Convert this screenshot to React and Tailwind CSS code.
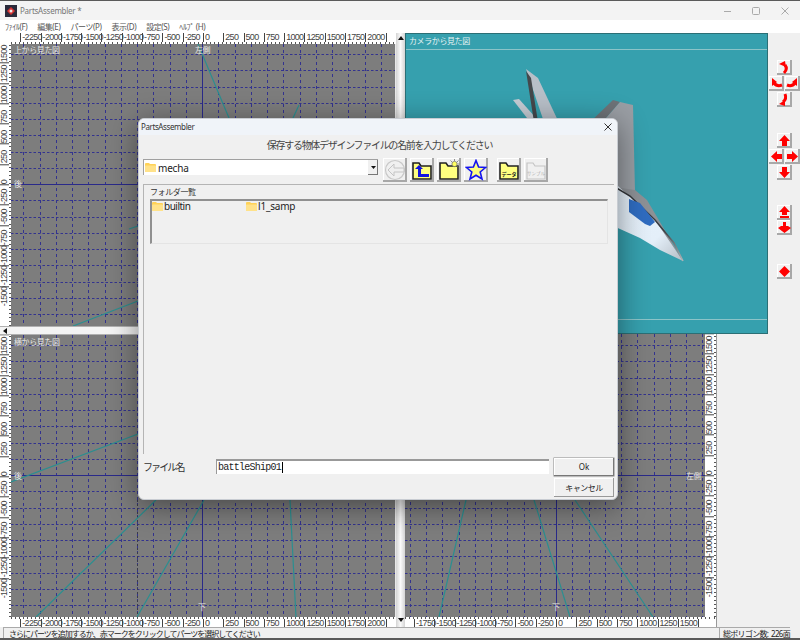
import React from "react";

const FONT = "font-['Noto_Sans','Noto_Sans_CJK_JP',sans-serif]";

const H_TOP = [-2250, -2000, -1750, -1500, -1250, -1000, -750, -500, -250, 0, 250, 500, 750, 1000, 1250, 1500, 1750, 2000, ""];
const H_RIGHT = [-1750, -1500, -1250, -1000, -750, -500, -250, 0, 250, 500, 750, 1000, 1250, 1500, ""];
const V_VALUES = [1500, 1250, 1000, 750, 500, 250, 0, -250, -500, -750, -1000, -1250, -1500];

const HRuler = ({ values, lead, ticksTop = false }) => {
  const ticks = <div className="h-[2px] shrink-0 bg-[repeating-linear-gradient(90deg,#555_0,#555_1px,transparent_1px,transparent_4.06px)]" />;
  return (
    <div className="flex-1 min-w-0 h-full flex flex-col overflow-hidden bg-white">
      {ticksTop && ticks}
      <div className="flex flex-1 min-h-0" style={{ paddingLeft: lead }}>
        {values.map((v, i) => (
          <div key={i} className="w-[20.3px] shrink-0 border-l border-[#444] pl-px text-[9px] leading-[8px] tracking-[-0.7px] text-[#444] font-['Liberation_Sans',sans-serif]">
            {v}
          </div>
        ))}
      </div>
      {!ticksTop && ticks}
    </div>
  );
};

const VRuler = ({ top, className = "" }) => (
  <div className={`h-full shrink-0 flex overflow-hidden bg-white ${className}`}>
    <div className="flex-1 flex flex-col" style={{ marginTop: top }}>
      {V_VALUES.map((v) => (
        <div key={v} className="h-[20.3px] shrink-0 border-b border-[#444] [writing-mode:vertical-lr] rotate-180 text-[9px] leading-[9px] tracking-[-0.7px] text-[#444] font-['Liberation_Sans',sans-serif]">
          {v}
        </div>
      ))}
    </div>
    <div className="w-[2px] bg-[repeating-linear-gradient(0deg,#555_0,#555_1px,transparent_1px,transparent_4.06px)]" />
  </div>
);

// grid view, drawn in screen coordinates through the viewBox
const GridView = ({ x, y, w, h, axisX, axisY, lines, labels, children }) => {
  const vs = [];
  const hs = [];
  for (let i = -20; i <= 20; i++) {
    vs.push(axisX + i * 16.25);
    hs.push(axisY + i * 16.25);
  }
  return (
    <div className="relative shrink-0 bg-[#7d7d7d] overflow-hidden" style={{ width: w, height: h }}>
      <svg width={w} height={h} viewBox={`${x} ${y} ${w} ${h}`} className="block">
        {vs.map((p) => (
          <line key={p} x1={Math.round(p) + 0.5} x2={Math.round(p) + 0.5} y1={y} y2={y + h} stroke="#33338f" strokeDasharray="3 3" />
        ))}
        {hs.map((p) => (
          <line key={p} y1={Math.round(p) + 0.5} y2={Math.round(p) + 0.5} x1={x} x2={x + w} stroke="#33338f" strokeDasharray="2.5 2" />
        ))}
        <line x1={axisX + 0.5} x2={axisX + 0.5} y1={y} y2={y + h} stroke="#2a2a8a" />
        <line y1={axisY + 0.5} y2={axisY + 0.5} x1={x} x2={x + w} stroke="#2a2a8a" />
        {children}
        {lines.map((l, i) => (
          <line key={i} x1={l[0]} y1={l[1]} x2={l[2]} y2={l[3]} stroke="#2b8f90" strokeWidth="1.2" />
        ))}
      </svg>
      {labels.map((l) => (
        <span key={l.text + l.x} className="absolute text-[8px] leading-[10px] tracking-[-0.4px] text-[#e6e6e6]" style={{ left: l.x - x, top: l.y - y }}>
          {l.text}
        </span>
      ))}
    </div>
  );
};

const Camera = () => (
  <div className="relative w-[363px] shrink-0 h-full bg-[#36a0ae] border border-[#2b6f75]">
    <svg width="361" height="299" viewBox="406 34 361 299" className="block">
      <defs>
        <linearGradient id="belly" x1="0" y1="0" x2="1" y2="1">
          <stop offset="0" stopColor="#e6f1fb" />
          <stop offset="0.7" stopColor="#e4eff9" />
          <stop offset="1" stopColor="#b4bcc4" />
        </linearGradient>
        <linearGradient id="edge" x1="0" y1="0" x2="1" y2="1">
          <stop offset="0" stopColor="#2c2e32" />
          <stop offset="0.7" stopColor="#3a3d42" />
          <stop offset="1" stopColor="#b0b4b8" />
        </linearGradient>
      </defs>
      <line x1="406" x2="767" y1="49.5" y2="49.5" stroke="#8cc4c8" />
      <line x1="406" x2="767" y1="319.5" y2="319.5" stroke="#8cc4c8" />
      <polygon points="513,100 519,99 536,118 527,118" fill="#c5ccd4" />
      <polygon points="526,69 538,78 560,125 545,125" fill="#b8bfc8" />
      <polygon points="526,71 531,78 538,122 534,122" fill="#45484c" />
      <polygon points="587,125 613,100 620,102 600,125" fill="#6e7378" />
      <polygon points="600,125 620,102 633,105 635,192 600,195" fill="#9a9ea4" />
      <polygon points="600,185 635,190 647,200 683,261 655,222" fill="#8d9196" />
      <polygon points="600,180 618,186 655,220 683,261 660,250 640,238 600,220" fill="url(#belly)" />
      <polyline points="600,178 630,196 655,220 674,243 683,261" fill="none" stroke="url(#edge)" strokeWidth="1.5" />
      <polygon points="629,199 640,203 655,222 650,226 645,224 629,212" fill="#2f6cc0" />
    </svg>
    <span className="absolute left-[3px] top-[1px] text-[8px] leading-[11px] tracking-[-0.4px] text-[#e6f2f3]">カメラから見た図</span>
  </div>
);

const RedIcon = ({ name }) => {
  const red = "#ff0000";
  const shapes = {
    rotUp: <><path d="M7 13 Q11 9 8 5" fill="none" stroke={red} strokeWidth="3" /><polygon points="2,4 8,1 9,7" fill={red} /></>,
    rotDown: <><path d="M8 2 Q10 7 6 10" fill="none" stroke={red} strokeWidth="3" /><polygon points="2,12 8,8 8,14" fill={red} /></>,
    rotLeft: <><path d="M13 9 Q8 11 5 7" fill="none" stroke={red} strokeWidth="3" /><polygon points="3,2 8,6 3,10" fill={red} /></>,
    rotRight: <><path d="M2 9 Q7 11 10 7" fill="none" stroke={red} strokeWidth="3" /><polygon points="12,2 7,6 12,10" fill={red} /></>,
    up: <polygon points="7.5,2 13,8 10,8 10,13 5,13 5,8 2,8" fill={red} />,
    down: <polygon points="7.5,13 13,7 10,7 10,2 5,2 5,7 2,7" fill={red} />,
    left: <polygon points="2,7.5 8,2 8,5 13,5 13,10 8,10 8,13" fill={red} />,
    right: <polygon points="13,7.5 7,2 7,5 2,5 2,10 7,10 7,13" fill={red} />,
    fwd: <><polygon points="7.5,1 13,7 10,7 10,10 5,10 5,7 2,7" fill={red} /><rect x="3" y="11" width="9" height="2" fill={red} /></>,
    back: <polygon points="7.5,13 14,8 11,6 9,6 9,2 6,2 6,6 4,6 1,8" fill={red} />,
    diamond: <polygon points="7.5,2 13,7.5 7.5,13 2,7.5" fill={red} />,
  };
  return <svg width="15" height="15" viewBox="0 0 15 15" className="block">{shapes[name]}</svg>;
};

const RedButton = ({ name }) => (
  <button className="w-[15px] h-[15px] p-0 bg-[#f0f0f0] shadow-[inset_-2px_-2px_0_#a8a8a8,inset_1px_1px_0_#fff]">
    <RedIcon name={name} />
  </button>
);

const Cross = ({ names }) => (
  <div className="flex flex-col items-center gap-px">
    <RedButton name={names[0]} />
    <div className="flex gap-px">
      <RedButton name={names[1]} />
      <RedButton name={names[2]} />
    </div>
    <RedButton name={names[3]} />
  </div>
);

const ControlPanel = () => (
  <div className="flex-1 flex flex-col items-center pt-[27px]">
    <Cross names={["rotUp", "rotLeft", "rotRight", "rotDown"]} />
    <div className="mt-[26px]">
      <Cross names={["up", "left", "right", "down"]} />
    </div>
    <div className="mt-[25px] flex flex-col">
      <RedButton name="fwd" />
      <RedButton name="back" />
    </div>
    <div className="mt-[26px]">
      <RedButton name="diamond" />
    </div>
  </div>
);

const Folder = () => (
  <svg width="11" height="9" viewBox="0 0 11 9" className="block shrink-0">
    <path d="M0 1 Q0 0 1 0 H4 L5 1 H10 Q11 1 11 2 V8 Q11 9 10 9 H1 Q0 9 0 8 Z" fill="#ffd257" />
    <rect x="0" y="2.5" width="11" height="6.5" rx="0.5" fill="#ffe28a" />
  </svg>
);

const ToolIcon = ({ kind }) => {
  const folder = "M2 4 H8 L10 7 H20 V20 H2 Z";
  if (kind === "back")
    return (
      <svg width="22" height="22" viewBox="0 0 22 22" className="block">
        <circle cx="11" cy="11" r="9.5" fill="none" stroke="#c8c8c8" strokeWidth="1.2" />
        <path d="M10 5 L4 11 L10 17 V13 H20 V9 H10 Z" fill="#efefef" stroke="#c4c4c4" />
      </svg>
    );
  if (kind === "star")
    return (
      <svg width="22" height="22" viewBox="0 0 22 22" className="block">
        <polygon points="11,1.5 13.6,8 20.6,8.5 15.2,13 17,20 11,16.2 5,20 6.8,13 1.4,8.5 8.4,8" fill="#ffff80" stroke="#1414f0" strokeWidth="1.6" />
      </svg>
    );
  if (kind === "sample")
    return (
      <svg width="22" height="22" viewBox="0 0 22 22" className="block">
        <path d={folder} fill="#f0f0f0" stroke="#c4c4c4" strokeWidth="1.2" />
        <text x="11" y="16" textAnchor="middle" fontSize="4.5" fill="#b0b0b0">サンプル</text>
      </svg>
    );
  return (
    <svg width="22" height="22" viewBox="0 0 22 22" className="block">
      <path d={folder} fill="#ffff80" stroke="#222" strokeWidth="1.6" />
      {kind === "up" && <path d="M4 10 L8 6 L12 10 H10 V15 H18 V18 H7 V10 Z" fill="#1414e0" />}
      {kind === "new" && (
        <g stroke="#666" strokeWidth="0.7">
          <circle cx="16.5" cy="5" r="2.6" fill="#ffff60" />
          <path d="M16.5 0 V2 M21.5 5 H19.5 M12.5 1.5 L14 3 M20.5 1.5 L19 3 M20.5 8.5 L19 7" />
        </g>
      )}
      {kind === "data" && <text x="11" y="16.5" textAnchor="middle" fontSize="5" fontWeight="700" fill="#222">データ</text>}
    </svg>
  );
};

const ToolButton = ({ kind, className = "" }) => (
  <button className={`w-[24px] h-[24px] p-0 flex items-center justify-center bg-[#f0f0f0] shadow-[inset_-2px_-2px_0_#a8a8a8,inset_1px_1px_0_#fff] ${className}`}>
    <ToolIcon kind={kind} />
  </button>
);

const SaveDialog = () => (
  <div className="absolute left-[138px] top-[118px] w-[480px] h-[382px] flex flex-col rounded-[6px] overflow-hidden bg-[#f0f0f0] border border-[#c8ccd2] shadow-[0_6px_30px_rgba(0,0,0,0.45)]">
    <div className="h-[16px] shrink-0 flex items-center justify-between pl-[2px] pr-[5px] bg-[#f0f4f9] text-[8px] tracking-[-0.4px] text-[#333]">
      <span>PartsAssembler</span>
      <svg width="8" height="8" viewBox="0 0 8 8">
        <path d="M0.5 0.5 L7.5 7.5 M7.5 0.5 L0.5 7.5" stroke="#333" strokeWidth="1" />
      </svg>
    </div>
    <div className="h-[21px] mb-[2px] pl-[3px] shrink-0 flex items-center justify-center text-[10px] tracking-[-1.3px] text-[#444]">
      保存する物体デザインファイルの名前を入力してください
    </div>
    <div className="h-[26px] shrink-0 flex items-start px-[4px]">
      <div className="w-[235px] h-[16px] mt-px flex items-center bg-white border-l border-t border-[#a0a0a0]">
        <span className="ml-px"><Folder /></span>
        <span className="ml-[2px] text-[10px] leading-none tracking-[-0.2px] text-[#222]">mecha</span>
        <span className="ml-auto w-[10px] h-full flex items-center justify-center bg-[#f0f0f0] shadow-[inset_-1px_-1px_0_#777]">
          <svg width="5" height="3" viewBox="0 0 5 3"><polygon points="0,0 5,0 2.5,3" fill="#111" /></svg>
        </span>
      </div>
      <ToolButton kind="back" className="ml-[5px]" />
      <ToolButton kind="up" className="ml-[3px]" />
      <ToolButton kind="new" className="ml-[3px]" />
      <ToolButton kind="star" className="ml-[3px]" />
      <ToolButton kind="data" className="ml-[9px]" />
      <ToolButton kind="sample" className="ml-[3px]" />
    </div>
    <div className="h-[270px] shrink-0 ml-[4px] mr-[3px] flex flex-col border-t border-l border-[#b4b4b4]">
      <div className="h-[14px] pl-[6px] flex items-center text-[8px] tracking-[-0.4px] text-[#333]">フォルダ一覧</div>
      <div className="h-[45px] ml-[6px] mr-[6px] flex items-start border-t-2 border-l-2 border-t-[#909090] border-l-[#909090] border-r border-b border-r-[#e4e4e4] border-b-[#e4e4e4]">
        <div className="w-[94px] flex items-center">
          <Folder />
          <span className="ml-[1px] text-[10px] leading-[10px] tracking-[-0.5px] text-[#222]">builtin</span>
        </div>
        <div className="flex items-center">
          <Folder />
          <span className="ml-[1px] text-[10px] leading-[10px] tracking-[-0.2px] text-[#222]">l1_samp</span>
        </div>
      </div>
    </div>
    <div className="mt-[4px] flex items-start pl-[4px]">
      <span className="w-[73px] mt-[2px] text-[10px] leading-[14px] tracking-[-1.9px] text-[#333]">ファイル名</span>
      <div className="w-[333px] h-[15px] mt-px flex items-center pl-px bg-white border-t-2 border-l border-[#999]">
        <span className="text-[10px] leading-none tracking-[-0.75px] text-[#222] font-['Liberation_Mono',monospace]">battleShip01</span>
        <span className="w-px h-[11px] ml-px bg-black" />
      </div>
      <div className="ml-[5px] w-[60px] flex flex-col gap-[2px]">
        <button className="h-[18px] text-[8px] text-[#222] bg-[#f0f0f0] shadow-[inset_-1px_-1px_0_#777,inset_1px_1px_0_#fff,0_0_0_0.5px_#888]">Ok</button>
        <button className="h-[19px] text-[8px] tracking-[-0.5px] text-[#222] bg-[#f0f0f0] shadow-[inset_-1px_-1px_0_#999,inset_1px_1px_0_#fff]">キャンセル</button>
      </div>
    </div>
  </div>
);

const Triangle = ({ dir }) => {
  const pts = { up: "0,4 3,0 6,4", down: "0,0 6,0 3,4", left: "4,0 4,6 0,3" };
  return <svg width="6" height="6" viewBox="0 0 6 6" className="block"><polygon points={pts[dir]} fill="#111" /></svg>;
};

const TEAL_TL = [[198, 44, 229, 118], [73, 326, 138, 301], [299, 105, 293, 118], [129, 229, 138, 226]];
const TEAL_BL = [[36, 617, 156, 500], [137, 617, 204, 500], [296, 617, 290, 500], [11, 482, 138, 434]];
const TEAL_BR = [[439, 617, 466, 500], [570, 617, 534, 500], [653, 617, 575, 500]];

export default function App() {
  return (
    <div className={`relative w-[800px] h-[640px] flex flex-col overflow-hidden bg-[#f0f0f0] ${FONT}`}>
      {/* Title bar */}
      <div className="h-[20px] shrink-0 flex items-center border-t border-[#5a5a5a] bg-[#f3f3f3] pl-[5px] pr-[11px]">
        <svg width="12" height="12" viewBox="0 0 12 12" className="block">
          <rect width="12" height="12" fill="#2a2a3a" />
          <path d="M2 6 L6 2 L10 6 L6 10 Z" fill="#d83030" />
          <circle cx="6" cy="6" r="1.5" fill="#e8e8e8" />
        </svg>
        <span className="ml-[3px] text-[8px] tracking-[-0.25px] text-[#777]">PartsAssembler *</span>
        <div className="ml-auto flex items-center gap-[21px]">
          <svg width="8" height="8" viewBox="0 0 8 8"><line x1="1" x2="8" y1="4.5" y2="4.5" stroke="#aaa" /></svg>
          <svg width="8" height="8" viewBox="0 0 8 8"><rect x="0.5" y="0.5" width="7" height="7" rx="1" fill="none" stroke="#aaa" /></svg>
          <svg width="8" height="8" viewBox="0 0 8 8"><path d="M0.5 0.5 L7.5 7.5 M7.5 0.5 L0.5 7.5" stroke="#aaa" /></svg>
        </div>
      </div>

      {/* Menu */}
      <div className="h-[13px] shrink-0 flex items-center pl-[5px] gap-[10px] bg-white text-[8px] tracking-[-0.4px] text-[#555]">
        <span>ﾌｧｲﾙ(F)</span>
        <span>編集(E)</span>
        <span>パーツ(P)</span>
        <span>表示(D)</span>
        <span>設定(S)</span>
        <span>ﾍﾙﾌﾟ (H)</span>
      </div>

      {/* Workspace */}
      <div className="h-[594px] shrink-0 flex">
        <div className="w-[396px] shrink-0 flex flex-col">
          <div className="h-[11px] flex bg-white">
            <div className="w-[11px] shrink-0" />
            <HRuler values={H_TOP} lead="9.3px" />
          </div>
          <div className="h-[282px] flex">
            <VRuler top="-2px" className="w-[11px]" />
            <GridView x={11} y={44} w={384} h={282} axisX={202} axisY={184} lines={TEAL_TL} labels={[{ text: "上から見た図", x: 14, y: 45 }, { text: "左側", x: 195, y: 45 }, { text: "後", x: 14, y: 179 }]} />
            <div className="w-px bg-[#e8e8e8]" />
          </div>
          <div className="h-[9px] flex items-center bg-[#f4f4f4] border-y border-[#b0b0b0]">
            <div className="w-[11px] flex justify-center"><Triangle dir="left" /></div>
          </div>
          <div className="h-[282px] flex">
            <VRuler top="-1px" className="w-[11px]" />
            <GridView x={11} y={335} w={384} h={282} axisX={202} axisY={475} lines={TEAL_BL} labels={[{ text: "横から見た図", x: 14, y: 337 }, { text: "後", x: 14, y: 471 }, { text: "下", x: 198, y: 602 }]}>
              <line x1="137.5" x2="137.5" y1="500" y2="617" stroke="#3a3a4a" strokeDasharray="2 2" />
            </GridView>
            <div className="w-px bg-[#e8e8e8]" />
          </div>
          <div className="h-[10px] flex bg-white">
            <div className="w-[11px] shrink-0" />
            <HRuler values={H_TOP} lead="9.3px" ticksTop />
          </div>
        </div>

        {/* Splitter */}
        <div className="w-[9px] shrink-0 flex flex-col items-center justify-between py-[3px] bg-[linear-gradient(90deg,#d4d4d4,#fafafa,#d4d4d4)]">
          <Triangle dir="up" />
          <Triangle dir="down" />
        </div>

        <div className="flex-1 min-w-0 flex flex-col">
          <div className="h-[301px] flex">
            <Camera />
            <ControlPanel />
          </div>
          <div className="h-[283px] flex">
            <GridView x={405} y={334} w={300} h={283} axisX={556} axisY={475} lines={TEAL_BR} labels={[{ text: "左側", x: 686, y: 471 }, { text: "下", x: 552, y: 602 }]} />
            <VRuler top="-1px" className="w-[12px] border-r border-[#999]" />
          </div>
          <div className="h-[10px] w-[312px] flex border-r border-[#999]">
            <HRuler values={H_RIGHT} lead="9px" ticksTop />
          </div>
        </div>
      </div>

      {/* Status bar */}
      <div className="h-[11px] shrink-0 flex items-center pl-[3px] pr-[10px] text-[8px] leading-[11px] tracking-[-1px] text-[#222]">
        <div className="h-full flex-1 pl-[5px] border-l border-t border-[#aaa]">
          さらにパーツを追加するか、赤マークをクリックしてパーツを選択してください
        </div>
        <div className="w-[71px] h-full pl-[3px] border-l border-t border-[#aaa] tracking-[-0.7px] whitespace-pre">総ポリゴン数:  226面</div>
      </div>
      <div className="flex-1 bg-[#5a5a5a]" />

      <SaveDialog />
    </div>
  );
}
